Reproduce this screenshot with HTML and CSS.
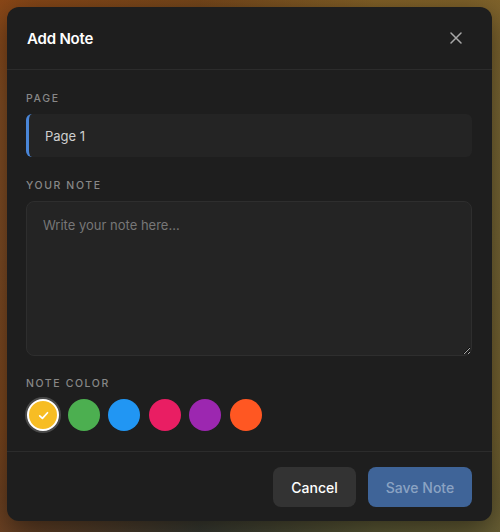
FILE: index.html
```html
<!DOCTYPE html>
<html lang="en">
<head>
<meta charset="utf-8">
<title>Add Note</title>
<link rel="stylesheet" href="styles.css">
</head>
<body>
<div class="backdrop">
  <div class="modal">
    <div class="modal-header">
      <h2 class="modal-title">Add Note</h2>
      <button class="close-btn" aria-label="Close">
        <svg width="12" height="12" viewBox="0 0 12 12"><path d="M1 1L11 11M11 1L1 11" stroke="#a8a8a8" stroke-width="1.5" stroke-linecap="round"/></svg>
      </button>
    </div>
    <div class="modal-body">
      <label class="field-label">Page</label>
      <input class="page-input" type="text" value="Page 1" readonly>
      <label class="field-label">Your Note</label>
      <textarea class="note-input" placeholder="Write your note here..."></textarea>
      <label class="field-label">Note Color</label>
      <div class="swatches">
        <span class="swatch swatch-selected" style="background:#f7bd24">
          <svg width="13" height="13" viewBox="0 0 12 12"><path d="M2.5 6.3L5 8.7L9.7 3.5" fill="none" stroke="#fff" stroke-width="1.6" stroke-linecap="round" stroke-linejoin="round"/></svg>
        </span>
        <span class="swatch" style="background:#4caf50"></span>
        <span class="swatch" style="background:#2196f3"></span>
        <span class="swatch" style="background:#e91e63"></span>
        <span class="swatch" style="background:#9c27b0"></span>
        <span class="swatch" style="background:#ff5722"></span>
      </div>
    </div>
    <div class="modal-footer">
      <button class="btn btn-cancel">Cancel</button>
      <button class="btn btn-save">Save Note</button>
    </div>
  </div>
</div>
</body>
</html>
```
FILE: styles.css
```css
* { box-sizing: border-box; }

html, body {
  margin: 0;
  height: 100%;
}

body {
  font-family: Inter, "Noto Sans", sans-serif;
  background: linear-gradient(180deg, #7a4a1c 0%, #6a5a3a 20%, #5e553c 50%, #5a4a2c 80%, #2a3a3a 100%);
}

/* blurred page behind the dialog */
.backdrop {
  height: 532px;
  padding: 7px 8px 11px 7px;
  background:
    linear-gradient(90deg, rgba(150,70,20,0.6) 0%, rgba(110,60,20,0.2) 40%, rgba(140,120,50,0.5) 75%, rgba(130,110,50,0.7) 100%);
}

.modal {
  width: 485px;
  height: 514px;
  background: #1e1e1e;
  border-radius: 12px;
  display: flex;
  flex-direction: column;
  box-shadow: 0 8px 30px rgba(0,0,0,0.5);
}

.modal-header {
  height: 63px;
  padding: 0 30px 0 20px;
  display: flex;
  align-items: center;
  justify-content: space-between;
  border-bottom: 1px solid #2c2c2c;
}

.modal-title {
  margin: 0;
  font-size: 15px;
  font-weight: 600;
  color: #ffffff;
  letter-spacing: -0.2px;
}

.close-btn {
  background: none;
  border: 0;
  padding: 0;
  display: flex;
  cursor: pointer;
}

.modal-body {
  padding: 22px 20px 20px 19px;
  display: flex;
  flex-direction: column;
  border-bottom: 1px solid #2c2c2c;
}

.field-label {
  font-size: 10.5px;
  font-weight: 500;
  text-transform: uppercase;
  letter-spacing: 1.6px;
  color: #888888;
  line-height: 13px;
  margin-bottom: 9px;
}

.page-input {
  height: 43px;
  background: #242424;
  border: 0;
  border-left: 3px solid #4a86d8;
  border-radius: 6px;
  padding: 0 16px;
  font-family: inherit;
  font-size: 13px;
  color: #cfcfcf;
  outline: none;
  margin-bottom: 22px;
}

.note-input {
  height: 155px;
  background: #242424;
  border: 1px solid #2e2e2e;
  border-radius: 8px;
  padding: 15px 16px;
  font-family: inherit;
  font-size: 13px;
  color: #cfcfcf;
  outline: none;
  margin: 0 0 21px;
  resize: vertical;
}

.note-input::placeholder {
  color: #777777;
}

.swatches {
  display: flex;
  gap: 8.6px;
  padding-left: 1px;
}

.swatch {
  width: 32px;
  height: 32px;
  border-radius: 50%;
  display: flex;
  align-items: center;
  justify-content: center;
}

.swatch-selected {
  border: 2px solid #ffffff;
  box-shadow: 0 0 0 2px #4a4a4a;
}

.modal-footer {
  flex: 1;
  display: flex;
  justify-content: flex-end;
  align-items: flex-start;
  gap: 12px;
  padding: 15px 20px 0;
}

.btn {
  height: 40px;
  border: 0;
  border-radius: 8px;
  font-family: inherit;
  font-size: 14px;
  font-weight: 500;
  padding: 0;
  white-space: nowrap;
  cursor: pointer;
}

.btn-cancel {
  width: 83px;
  background: #333333;
  color: #ffffff;
}

.btn-save {
  width: 104px;
  background: #3f6498;
  color: #8ba3c3;
}
```
